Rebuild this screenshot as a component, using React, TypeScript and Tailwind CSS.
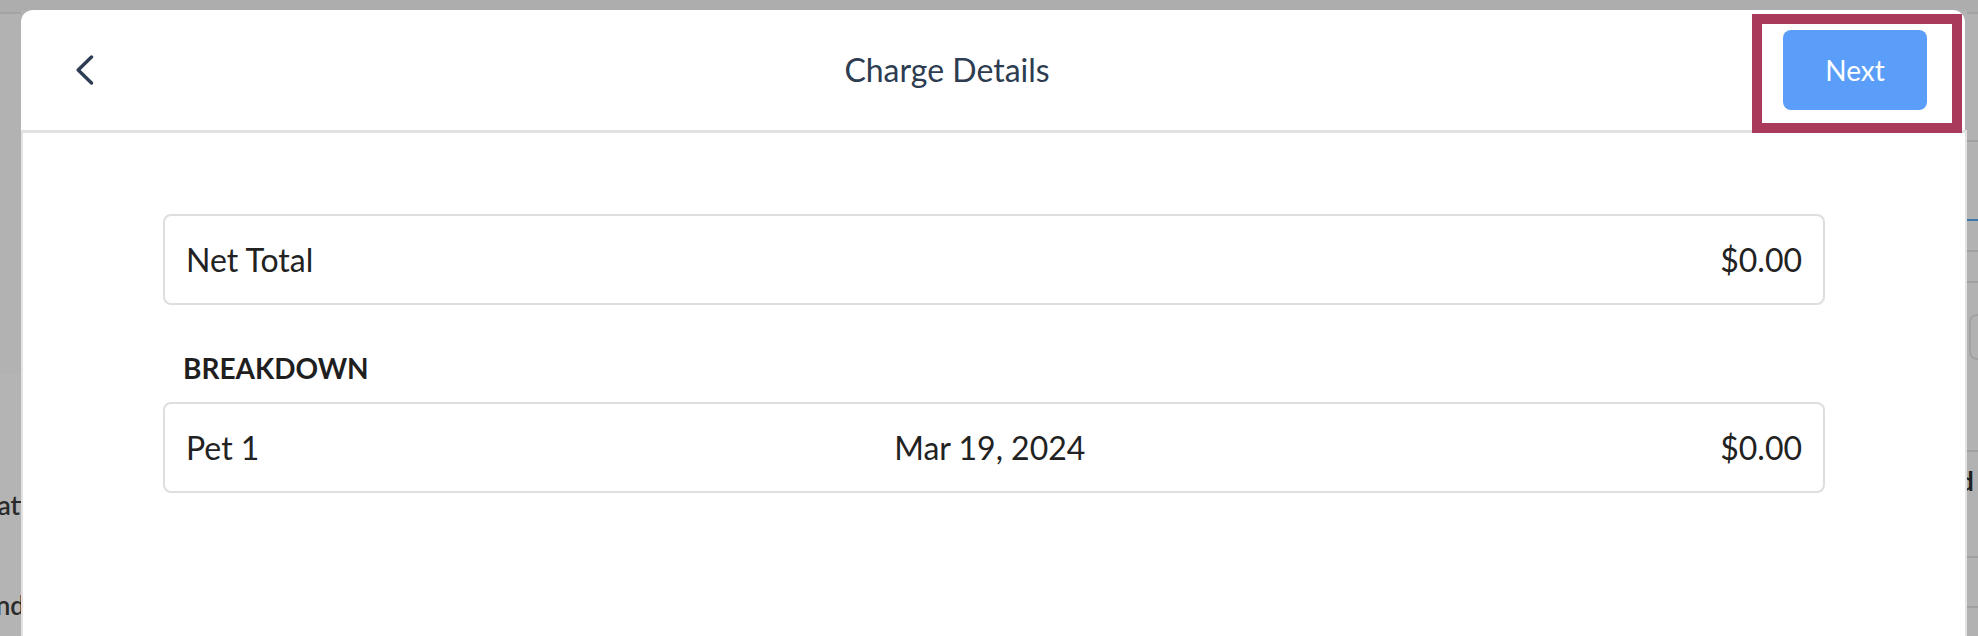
import React from "react";

const rowText = "text-[32px] leading-[38px] text-[#222222]";

const BackIcon = () => (
  <svg width="20" height="30" viewBox="0 0 20 30" fill="none">
    <path
      d="M16.5 2 L3.2 15 L16.5 28"
      stroke="#2c3d54"
      strokeWidth="3.4"
      strokeLinecap="round"
      strokeLinejoin="round"
    />
  </svg>
);

const LeftStrip = () => (
  <div className="w-[21px] shrink-0 flex flex-col overflow-hidden">
    <div className="h-[2px] bg-[#adadad]" />
    <div className="h-[2px] bg-[#a3a3a3]" />
    <div className="h-[360px]" />
    <div className="flex-1 bg-[#b4b4b4] flex flex-col items-end pt-[118px] gap-[74px] font-['Lato'] text-[26px] leading-[26px] font-semibold text-[#2a2a2a]">
      <div className="whitespace-nowrap -mr-[6px]">Stati</div>
      <div className="whitespace-nowrap -mr-[4px]">Bond</div>
    </div>
  </div>
);

const RightStrip = () => (
  <div className="w-[11px] shrink-0 flex flex-col">
    <div className="h-[2px] bg-[#adadad]" />
    <div className="h-[2px] bg-[#a3a3a3]" />
    <div className="h-[126px]" />
    <div className="h-[2px] bg-[#a0a0a0]" />
    <div className="h-[77px]" />
    <div className="h-[2px] bg-[#3d78ad]" />
    <div className="h-[29px]" />
    <div className="h-[2px] bg-[#a0a0a0]" />
    <div className="h-[29px]" />
    <div className="h-[2px] bg-[#a0a0a0]" />
    <div className="h-[31px]" />
    <div className="h-[46px] ml-[2px] border-2 border-r-0 border-[#a2a2a2] rounded-l-[8px]" />
    <div className="h-[90px]" />
    <div className="h-[2px] bg-[#a0a0a0]" />
    <div className="h-[42px] flex items-end justify-start overflow-hidden">
      <span className="font-['Lato'] font-bold text-[26px] leading-[26px] text-[#1f1f1f] -ml-[8px]">d</span>
    </div>
    <div className="h-[62px]" />
    <div className="h-[2px] bg-[#a0a0a0]" />
    <div className="h-[48px]" />
    <div className="h-[2px] bg-[#a0a0a0]" />
  </div>
);

export default function App() {
  return (
    <div className="w-[1978px] h-[636px] overflow-hidden bg-[#b2b2b2] flex flex-col font-['Lato','Liberation_Sans',sans-serif]">
      <div className="h-[10px] shrink-0 bg-[#adadad]" />
      <div className="flex flex-1 min-h-0">
        <LeftStrip />
        <div className="relative flex-1 flex flex-col">
          <div className="h-[120px] shrink-0 mr-[2px] bg-white rounded-t-[12px] flex items-center justify-between px-[38px]">
            <button className="w-[52px] h-[52px] flex items-center justify-center">
              <BackIcon />
            </button>
            <div className="text-[32px] leading-[38px] text-[#2d3c50]">Charge Details</div>
            <button className="w-[144px] h-[80px] rounded-[8px] bg-[#5b9ef9] text-white text-[28px]">
              Next
            </button>
          </div>
          <div className="h-[3px] shrink-0 bg-[#e2e2e2]" />
          <div className="flex-1 bg-white border-x-2 border-[#e2e2e2] px-[140px] pt-[81px]">
            <div className="h-[91px] rounded-[8px] border-2 border-[#dedede] flex items-center justify-between px-[21px]">
              <span className={rowText}>Net Total</span>
              <span className={rowText}>$0.00</span>
            </div>
            <div className="mt-[46px] mb-[17px] pl-[20px] text-[28px] leading-[34px] font-bold text-[#1f1f1f]">
              BREAKDOWN
            </div>
            <div className="h-[91px] rounded-[8px] border-2 border-[#dedede] flex items-center justify-between px-[21px]">
              <span className={rowText}>Pet 1</span>
              <span className={rowText}>Mar 19, 2024</span>
              <span className={rowText}>$0.00</span>
            </div>
          </div>
          <div className="absolute left-[1731px] top-[4px] w-[210px] h-[119px] border-[10px] border-[#a93a5c] pointer-events-none" />
        </div>
        <RightStrip />
      </div>
    </div>
  );
}
